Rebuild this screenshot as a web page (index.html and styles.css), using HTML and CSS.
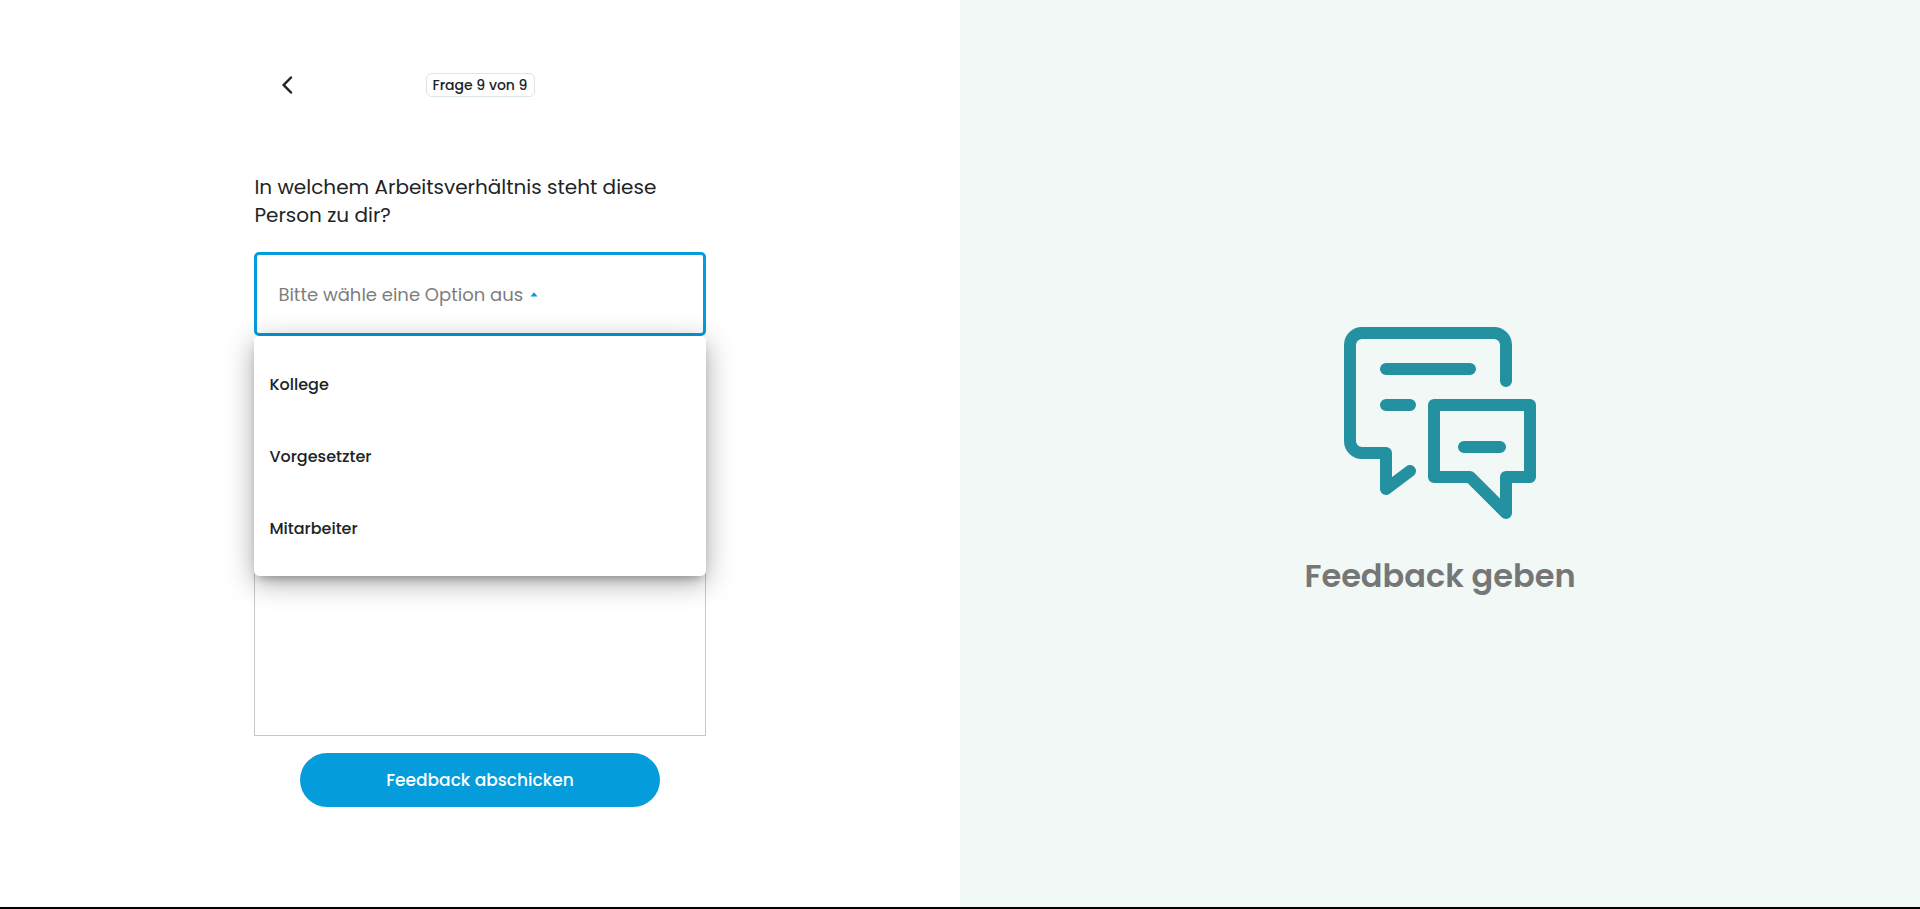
FILE: index.html
```html
<!DOCTYPE html>
<html lang="de">
<head>
  <meta charset="utf-8">
  <meta name="viewport" content="width=device-width, initial-scale=1">
  <title>Feedback geben</title>
  <link rel="stylesheet" href="styles.css">
</head>
<body>
  <div class="page">
    <main class="survey">
      <form class="survey-form">
        <header class="survey-header">
          <button class="back" type="button" aria-label="Zurück">
            <svg class="back-icon" viewBox="0 0 12 20" aria-hidden="true"><path d="M10 2.5 2.7 10 10 17.5"/></svg>
          </button>
          <span class="progress">Frage 9 von 9</span>
        </header>

        <label class="question" for="relation">In welchem Arbeitsverhältnis steht diese Person zu dir?</label>

        <div class="dropdown">
          <div class="field">
            <select class="field-select" id="relation">
              <option>Bitte wähle eine Option aus</option>
            </select>
            <svg class="caret" viewBox="0 0 8 5" aria-hidden="true"><path d="M.5 4.5 3.5 .8Q4 .4 4.5 .8L7.5 4.5Z"/></svg>
          </div>
          <ul class="menu">
            <li><button class="menu-item" type="button">Kollege</button></li>
            <li><button class="menu-item" type="button">Vorgesetzter</button></li>
            <li><button class="menu-item" type="button">Mitarbeiter</button></li>
          </ul>
        </div>

        <textarea class="comment" aria-label="Kommentar"></textarea>

        <button class="submit" type="submit">Feedback abschicken</button>
      </form>
    </main>

    <aside class="intro">
      <svg class="intro-icon" viewBox="0 0 192 192" aria-hidden="true">
        <path d="M162 54V18A12 12 0 0 0 150 6H18A12 12 0 0 0 6 18V114A12 12 0 0 0 18 126H42V162L66 144"/>
        <path d="M42 42H126M42 78H66M120 120H156"/>
        <path d="M90 78H186V150H162V186L126 150H90Z"/>
      </svg>
      <h1 class="intro-title">Feedback geben</h1>
    </aside>
  </div>
</body>
</html>
```

FILE: styles.css
```css
*,
*::before,
*::after {
  box-sizing: border-box;
}

body {
  margin: 0;
  color: #212325;
  font-family: Poppins, Inter, "Open Sans", sans-serif;
}

button,
select,
textarea {
  font: inherit;
  color: inherit;
}

.page {
  display: grid;
  grid-template-columns: 1fr 1fr;
  min-height: 100vh;
  border-bottom: 2px solid #000;
}

.survey {
  display: flex;
  justify-content: center;
  background: #fff;
}

.survey-form {
  display: flex;
  flex-direction: column;
  width: 47%;
  padding: 73px 0;
}

.survey-header {
  display: grid;
  grid-template-columns: 1fr auto 1fr;
  align-items: center;
  margin-bottom: 76px;
}

.back {
  display: flex;
  justify-self: start;
  margin-left: 27px;
  padding: 0;
  border: 0;
  background: none;
}

.back-icon {
  width: 12px;
  height: 20px;
  fill: none;
  stroke: #212325;
  stroke-width: 2.5;
  stroke-linecap: round;
}

.progress {
  padding: 0 6px;
  border: 1px solid #dce5ea;
  border-radius: 6px;
  font-size: 14px;
  font-weight: 500;
  line-height: 22px;
}

.question {
  margin-bottom: 23px;
  font-size: 20px;
  line-height: 28px;
}

.dropdown {
  position: relative;
  margin-bottom: 16px;
}

.field {
  display: flex;
  align-items: center;
  gap: 7px;
  height: 84px;
  padding: 0 21px;
  border: 3px solid #049cdb;
  border-radius: 5px;
}

.field-select {
  field-sizing: content;
  appearance: none;
  padding: 0;
  border: 0;
  outline: 0;
  background: none;
  color: #7d7d7d;
  font-size: 18px;
}

.caret {
  width: 8px;
  height: 5px;
  fill: #049cdb;
}

.menu {
  position: absolute;
  top: 100%;
  left: 0;
  right: 0;
  margin: 0;
  padding: 12px 0;
  border-radius: 5px;
  background: #fff;
  list-style: none;
  box-shadow:
    0 6px 10px -4px rgba(0, 0, 0, 0.28),
    0 6px 28px rgba(0, 0, 0, 0.35);
}

.menu-item {
  display: block;
  width: 100%;
  height: 72px;
  padding: 0 15px;
  border: 0;
  background: none;
  font-size: 16px;
  font-weight: 500;
  text-align: left;
}

.comment {
  height: 384px;
  margin-bottom: 17px;
  border: 1px solid #c8c8c8;
  resize: none;
}

.submit {
  align-self: center;
  width: 80%;
  height: 54px;
  border: 0;
  border-radius: 27px;
  background: #049cdb;
  color: #fff;
  font-size: 17px;
  font-weight: 500;
}

.intro {
  display: flex;
  flex-direction: column;
  align-items: center;
  justify-content: center;
  gap: 33px;
  padding-top: 20px;
  background: #f1f8f6;
}

.intro-icon {
  width: 192px;
  height: 192px;
  fill: none;
  stroke: #23919f;
  stroke-width: 12;
  stroke-linecap: round;
  stroke-linejoin: round;
}

.intro-title {
  margin: 0;
  color: #757776;
  font-size: 32px;
  font-weight: 600;
  line-height: 48px;
}
```
